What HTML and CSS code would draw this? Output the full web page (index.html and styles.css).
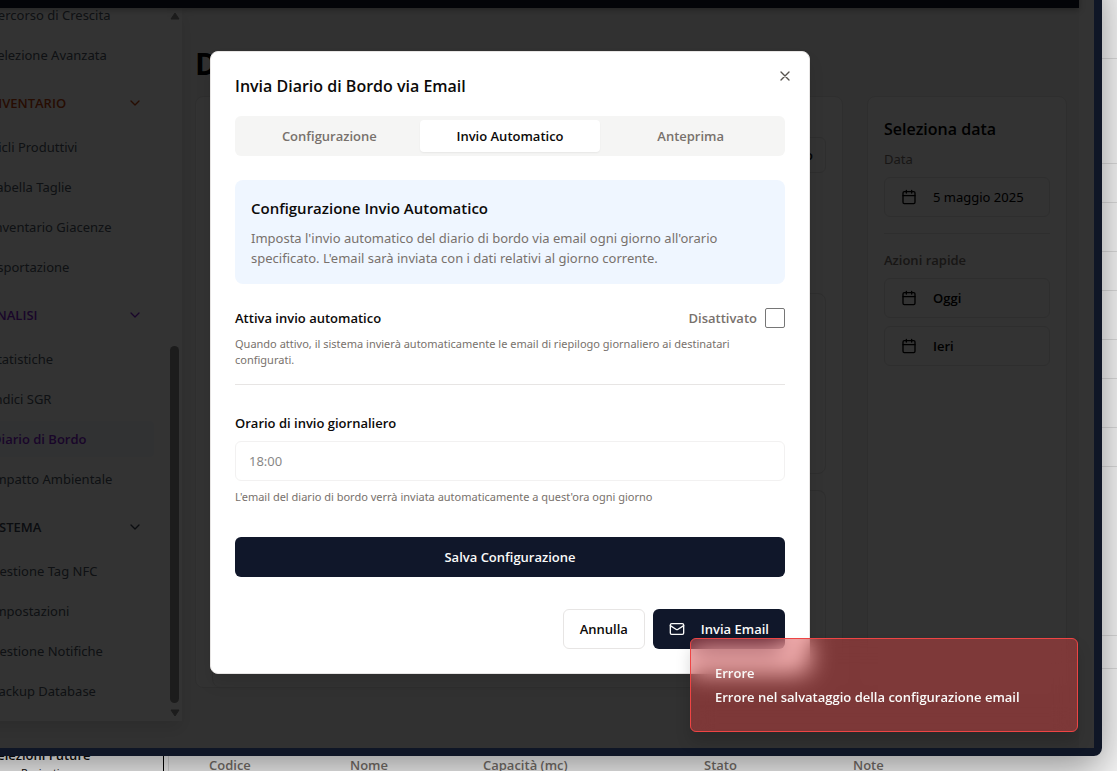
FILE: index.html
```
<!DOCTYPE html>
<html lang="it">
<head>
<meta charset="utf-8">
<title>Diario di Bordo</title>
<link rel="stylesheet" href="styles.css">
</head>
<body>
<div class="desk">
  <aside class="desk-side">
    <p class="desk-side-title">Selezioni Future</p>
    <p class="desk-side-sub">Projecti</p>
  </aside>
  <section class="desk-main">
    <div class="desk-rows">
      <div class="desk-row row-first"></div>
      <div class="desk-row row-wide"></div>
      <div class="desk-row row-short"></div>
      <div class="desk-row row-tall"></div>
      <div class="desk-row row-short"></div>
      <div class="desk-row row-tall"></div>
      <div class="desk-row row-short"></div>
      <div class="desk-row row-tall"></div>
      <div class="desk-row row-short"></div>
      <div class="desk-row row-last"></div>
      <div class="desk-row row-gap"></div>
    </div>
    <table class="desk-table">
      <thead>
        <tr><th class="c-code">Codice</th><th class="c-name">Nome</th><th class="c-cap">Capacità (mc)</th><th class="c-state">Stato</th><th>Note</th></tr>
      </thead>
    </table>
  </section>
</div>

<div class="window">
  <div class="app">
    <div class="app-view">
      <header class="topbar"></header>
      <div class="app-body">
        <div class="sidebar">
          <nav class="menu">
            <a class="item" href="#">Percorso di Crescita</a>
            <a class="item" href="#">Selezione Avanzata</a>
            <button class="section orange" type="button">INVENTARIO<svg class="icon" viewBox="0 0 24 24"><path d="m6 9 6 6 6-6"/></svg></button>
            <a class="item" href="#">Cicli Produttivi</a>
            <a class="item" href="#">Tabella Taglie</a>
            <a class="item" href="#">Inventario Giacenze</a>
            <a class="item" href="#">Esportazione</a>
            <button class="section purple" type="button">ANALISI<svg class="icon" viewBox="0 0 24 24"><path d="m6 9 6 6 6-6"/></svg></button>
            <a class="item" href="#">Statistiche</a>
            <a class="item" href="#">Indici SGR</a>
            <a class="item active" href="#">Diario di Bordo</a>
            <a class="item" href="#">Impatto Ambientale</a>
            <button class="section slate" type="button">SISTEMA<svg class="icon" viewBox="0 0 24 24"><path d="m6 9 6 6 6-6"/></svg></button>
            <a class="item" href="#">Gestione Tag NFC</a>
            <a class="item" href="#">Impostazioni</a>
            <a class="item" href="#">Gestione Notifiche</a>
            <a class="item" href="#">Backup Database</a>
          </nav>
          <div class="scrollbar">
            <svg class="arrow" viewBox="0 0 10 8"><path d="M5 1 9 7H1Z"/></svg>
            <div class="thumb"></div>
            <svg class="arrow" viewBox="0 0 10 8"><path d="M5 7 9 1H1Z"/></svg>
          </div>
        </div>
        <main class="main">
          <h1 class="page-title">Diario di Bordo</h1>
          <div class="columns">
            <section class="card journal">
              <button class="export" type="button">Esporta Diario</button>
              <div class="panel panel-top"></div>
              <div class="panel panel-rest"></div>
            </section>
            <section class="card picker">
              <h2 class="card-title">Seleziona data</h2>
              <p class="caption">Data</p>
              <button class="date-btn regular" type="button"><svg class="icon" viewBox="0 0 24 24"><path d="M8 2v4M16 2v4M3 10h18"/><rect x="3" y="4" width="18" height="18" rx="2"/></svg>5 maggio 2025</button>
              <hr class="rule">
              <p class="caption strong">Azioni rapide</p>
              <button class="date-btn" type="button"><svg class="icon" viewBox="0 0 24 24"><path d="M8 2v4M16 2v4M3 10h18"/><rect x="3" y="4" width="18" height="18" rx="2"/></svg>Oggi</button>
              <button class="date-btn" type="button"><svg class="icon" viewBox="0 0 24 24"><path d="M8 2v4M16 2v4M3 10h18"/><rect x="3" y="4" width="18" height="18" rx="2"/></svg>Ieri</button>
            </section>
          </div>
        </main>
      </div>
    </div>
    <div class="page-scroll"></div>
  </div>

  <div class="overlay">
    <div class="dialog" role="dialog" aria-labelledby="dialog-title">
      <button class="close" type="button" aria-label="Chiudi"><svg class="icon" viewBox="0 0 24 24"><path d="M18 6 6 18M6 6l12 12"/></svg></button>
      <h2 class="dialog-title" id="dialog-title">Invia Diario di Bordo via Email</h2>
      <div class="tabs" role="tablist">
        <button class="tab" type="button" role="tab">Configurazione</button>
        <button class="tab selected" type="button" role="tab" aria-selected="true">Invio Automatico</button>
        <button class="tab" type="button" role="tab">Anteprima</button>
      </div>
      <div class="info">
        <h3 class="info-title">Configurazione Invio Automatico</h3>
        <p class="info-text">Imposta l'invio automatico del diario di bordo via email ogni giorno all'orario specificato. L'email sarà inviata con i dati relativi al giorno corrente.</p>
      </div>
      <div class="toggle">
        <div class="toggle-row">
          <label class="label" for="auto">Attiva invio automatico</label>
          <span class="toggle-state">Disattivato<input class="check" type="checkbox" id="auto"></span>
        </div>
        <p class="hint">Quando attivo, il sistema invierà automaticamente le email di riepilogo giornaliero ai destinatari configurati.</p>
      </div>
      <div class="field">
        <label class="label" for="time">Orario di invio giornaliero</label>
        <input class="input" type="text" id="time" value="18:00" disabled>
        <p class="hint">L'email del diario di bordo verrà inviata automaticamente a quest'ora ogni giorno</p>
      </div>
      <button class="btn primary" type="button">Salva Configurazione</button>
      <div class="footer">
        <button class="btn outline" type="button">Annulla</button>
        <button class="btn primary" type="button"><svg class="icon" viewBox="0 0 24 24"><rect x="2" y="4" width="20" height="16" rx="2"/><path d="m22 7-8.97 5.700a1.940 1.940 0 0 1-2.060 0L2 7"/></svg>Invia Email</button>
      </div>
    </div>
  </div>

  <div class="toast" role="alert">
    <p>Errore</p>
    <p>Errore nel salvataggio della configurazione email</p>
  </div>
</div>
</body>
</html>
```
FILE: styles.css
```
* { box-sizing: border-box; }
html, body { height: 100%; }
body {
  margin: 0;
  position: relative;
  overflow: hidden;
  background: #f7f7f7;
  color: #0c0a09;
  font-family: "Open Sans", "Noto Sans", sans-serif;
  font-size: 13px;
  line-height: 20px;
}
h1, h2, h3, p { margin: 0; }
button, input { font: inherit; color: inherit; }
button { background: none; border: 0; padding: 0; }
a { color: inherit; text-decoration: none; }
.icon {
  width: 16px;
  height: 16px;
  flex: none;
  fill: none;
  stroke: currentColor;
  stroke-width: 2;
  stroke-linecap: round;
  stroke-linejoin: round;
}

/* Running text */
.item, .caption, .date-btn.regular, .info-text, .hint, .input {
  font-family: "Noto Sans", "Open Sans", sans-serif;
}

/* Page behind the window */
.desk { display: flex; height: 100%; overflow: hidden; gap: 4px; }
.desk-side {
  width: 164px;
  display: flex;
  flex-direction: column;
  justify-content: flex-end;
  border-right: 1px solid #000;
  margin-bottom: -11px;
}
.desk-side-title { font-weight: 600; margin-left: -10px; line-height: 18px; }
.desk-side-sub { font-size: 11px; line-height: 18px; margin-left: 21px; }
.desk-main { flex: 1; display: flex; flex-direction: column; border-left: 1px solid #d9d9d9; }
.desk-rows { flex: 1; min-height: 0; }
.desk-row { border-bottom: 1px solid #dcdcdc; }
.row-first { height: 59px; }
.row-wide { height: 105px; }
.row-short { height: 39px; }
.row-tall { height: 49px; }
.row-last { height: 169px; }
.row-gap { height: 33px; }
.desk-table { width: 100%; border-collapse: collapse; table-layout: fixed; color: #78716c; }
.desk-table th { padding: 0 0 0 40px; text-align: left; font-weight: 600; line-height: 12px; }
.desk-table .c-code { width: 141px; }
.desk-table .c-name { width: 133px; }
.desk-table .c-cap { width: 221px; }
.desk-table .c-state { width: 149px; }

/* Floating window */
.window {
  position: absolute;
  top: -32px;
  bottom: 15px;
  left: -82px;
  right: 15px;
  border: 8px solid #0f1626;
  border-radius: 8px;
  box-shadow: 0 12px 40px rgba(0, 0, 0, 0.42);
}
.app { display: flex; height: 100%; background: #f5f5f5; isolation: isolate; }
.app-view { flex: 1; display: flex; flex-direction: column; min-width: 0; }
.page-scroll { width: 15px; background: #fcfcfc; }
.topbar { height: 32px; flex: none; background: #10172a; box-shadow: 0 2px 6px rgba(0, 0, 0, 0.3); z-index: 1; }
.app-body { flex: 1; display: flex; min-height: 0; }

.sidebar {
  width: 256px;
  flex: none;
  display: flex;
  margin-bottom: 27px;
  overflow: hidden;
  background: #fff;
  box-shadow: 0 8px 16px rgba(0, 0, 0, 0.1);
}
.menu { flex: 1; display: flex; flex-direction: column; justify-content: flex-end; padding: 0 13px 10px 8px; }
.item {
  flex: none;
  margin: 2px 0;
  padding: 8px 0 8px 56px;
  border-radius: 4px;
  color: #4b5563;
}
.item.active { background: #f5f7ff; color: #7e22ce; font-family: "Open Sans", "Noto Sans", sans-serif; font-weight: 600; padding-left: 58px; }
.section {
  flex: none;
  display: flex;
  align-items: center;
  justify-content: space-between;
  margin: 8px 0 4px;
  padding: 10px 11px 10px 54px;
  font-weight: 600;
}
.orange { color: #c2410c; }
.purple { color: #7e22ce; }
.slate { color: #374151; }
.scrollbar {
  width: 15px;
  display: flex;
  flex-direction: column;
  align-items: center;
  padding: 4px 0;
  background: #fcfcfc;
}
.arrow { width: 10px; height: 8px; fill: #8b8b8b; stroke: #8b8b8b; stroke-width: 1; stroke-linejoin: round; }
.thumb { width: 9px; height: 357px; margin: auto 0 6px; border-radius: 5px; background: #8b8b8b; }

.main { flex: 1; display: flex; flex-direction: column; padding: 36px 12px 60px 13px; }
.page-title { font-size: 30px; line-height: 40px; font-weight: 700; color: #000; margin-bottom: 12px; }
.columns { flex: 1; display: grid; grid-template-columns: 1fr 200px; gap: 24px; }
.card { display: flex; flex-direction: column; background: #fcfcfc; border: 1px solid #e5e5e5; border-radius: 8px; padding: 20px 16px; }
.export { align-self: flex-end; height: 36px; margin-top: 20px; padding: 0 12px; border: 1px solid #e5e5e5; border-radius: 6px; font-weight: 600; }
.panel { border: 1px solid #e5e5e5; border-radius: 8px; }
.panel-top { height: 181px; margin: 120px 0 16px; }
.panel-rest { flex: 1; margin-bottom: -20px; border-bottom: 0; }
.card-title { font-size: 16px; line-height: 24px; font-weight: 600; color: #000; }
.caption { color: #78716c; margin: 8px 0; }
.caption.strong { font-family: "Open Sans", "Noto Sans", sans-serif; font-weight: 600; margin-top: 0; }
.date-btn {
  display: flex;
  align-items: center;
  gap: 16px;
  height: 40px;
  flex: none;
  padding: 0 16px;
  margin-bottom: 8px;
  border: 1px solid #e5e5e5;
  border-radius: 6px;
  font-weight: 600;
  color: #000;
}
.date-btn.regular { font-weight: 400; }
.rule { width: 100%; height: 1px; border: 0; margin: 8px 0 16px; background: #e5e5e5; }

/* Dialog */
.overlay {
  position: absolute;
  inset: 0;
  display: flex;
  align-items: center;
  justify-content: center;
  background: rgba(0, 0, 0, 0.8);
}
.dialog {
  position: relative;
  width: 100%;
  max-width: 600px;
  display: flex;
  flex-direction: column;
  padding: 24px;
  border: 1px solid #e7e5e4;
  border-radius: 8px;
  background: #fff;
  box-shadow: 0 10px 15px rgba(0, 0, 0, 0.1);
}
.close { position: absolute; top: 16px; right: 16px; width: 16px; height: 16px; color: #57534e; }
.close .icon { display: block; }
.dialog-title { font-size: 16px; line-height: 20px; font-weight: 600; margin-bottom: 20px; }
.tabs { display: grid; grid-template-columns: 1fr 1fr 1fr; padding: 4px; border-radius: 6px; background: #f5f5f4; margin-bottom: 24px; }
.tab { height: 32px; border-radius: 4px; color: #78716c; font-weight: 600; }
.tab.selected { background: #fff; color: #0c0a09; box-shadow: 0 1px 2px rgba(0, 0, 0, 0.06); }
.info { padding: 16px; border-radius: 8px; background: #eff6ff; margin-bottom: 24px; }
.info-title { font-size: 15px; line-height: 24px; font-weight: 600; margin-bottom: 8px; }
.info-text { color: #78716c; }
.toggle { padding-bottom: 16px; border-bottom: 1px solid #e7e5e4; margin-bottom: 28px; }
.toggle-row { display: flex; justify-content: space-between; margin-bottom: 8px; }
.toggle-state { display: flex; gap: 8px; color: #78716c; font-weight: 600; }
.label { font-weight: 600; }
.check { appearance: none; width: 20px; height: 20px; margin: 0; border: 1px solid #767676; border-radius: 2px; background: #fff; }
.hint { font-size: 11px; line-height: 16px; color: #78716c; }
.field { display: flex; flex-direction: column; gap: 8px; margin-bottom: 32px; }
.input { height: 40px; padding: 0 13px; border: 1px solid #e7e5e4; border-radius: 6px; background: #fff; opacity: 0.5; }
.btn { display: flex; align-items: center; justify-content: center; gap: 16px; height: 40px; padding: 0 16px; border-radius: 6px; font-weight: 600; }
.btn.primary { background: #10172a; color: #fafaf9; }
.btn.outline { border: 1px solid #e7e5e4; }
.footer { display: flex; justify-content: flex-end; gap: 8px; margin-top: 32px; }

.toast {
  position: absolute;
  right: 16px;
  bottom: 16px;
  width: 388px;
  padding: 24px;
  border: 1px solid #ef4444;
  border-radius: 6px;
  background: rgba(239, 68, 68, 0.4);
  backdrop-filter: blur(12px);
  box-shadow: 0 10px 15px rgba(0, 0, 0, 0.15);
  color: #fafaf9;
  font-weight: 600;
}
.toast p + p { margin-top: 4px; }
```
